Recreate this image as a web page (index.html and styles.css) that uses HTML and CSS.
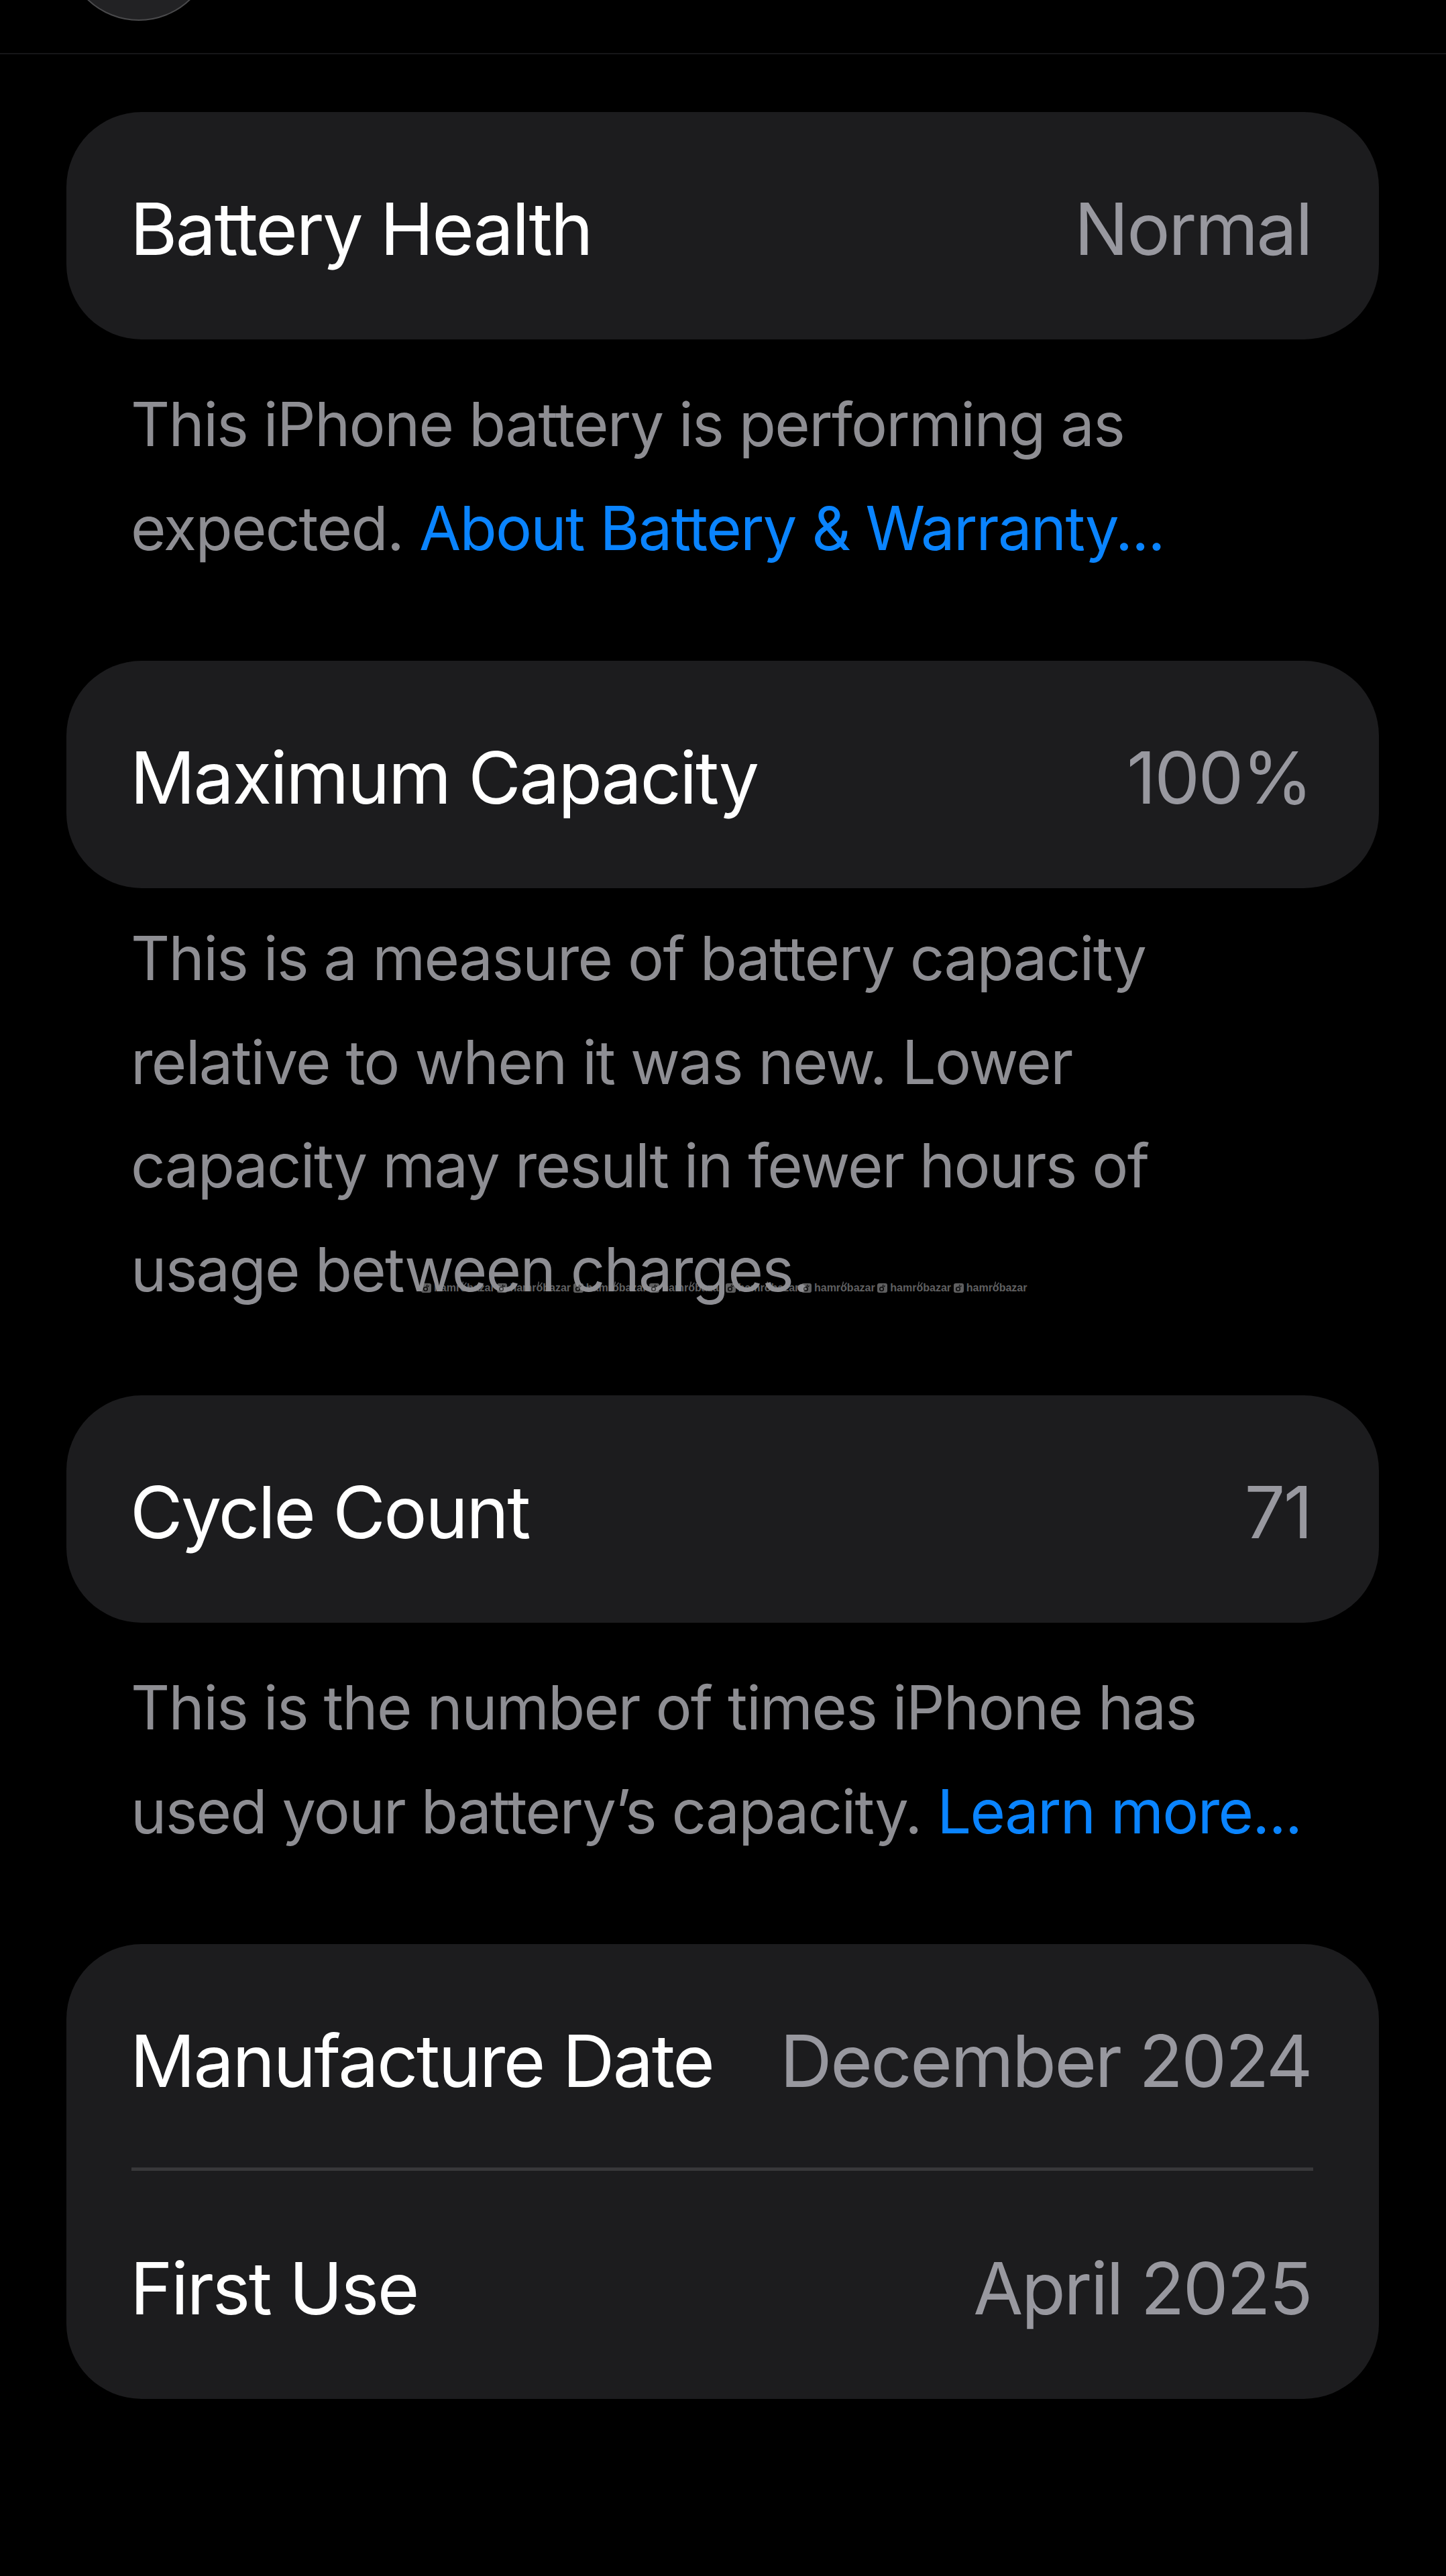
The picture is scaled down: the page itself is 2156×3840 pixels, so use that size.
FILE: index.html
```html
<!DOCTYPE html>
<html lang="en">

<head>
    <meta charset="UTF-8">
    <meta name="viewport" content="width=device-width, initial-scale=1.0">
    <title>Battery Health</title>
    <link rel="stylesheet" href="styles.css">
</head>

<body>

    <svg class="icon-defs" width="0" height="0">
        <symbol id="mark-icon" viewBox="0 0 15 14">
            <rect width="15" height="14" rx="3" fill="#929294" />
            <circle cx="6.5" cy="8.5" r="2.8" fill="none" stroke="#111" stroke-width="1.6" />
            <path d="M8 5 L9 2 M9.5 5.5 L11.5 3.5" stroke="#111" stroke-width="1.2" />
        </symbol>
        <symbol id="mark-leaf" viewBox="0 0 9 8">
            <path d="M1 8 L2.5 1.5 M3.5 8 L7.5 3" stroke="#929294" stroke-width="1.4" fill="none" />
        </symbol>
    </svg>

    <header class="top-bar">
        <div class="back-button"></div>
    </header>

    <main class="content">
        <section class="card">
            <div class="row">
                <span class="label">Battery Health</span>
                <span class="value">Normal</span>
            </div>
        </section>
        <p class="note note-two">This iPhone battery is performing as<br>expected. <a class="link" href="#">About Battery &amp; Warranty...</a></p>

        <section class="card">
            <div class="row">
                <span class="label">Maximum Capacity</span>
                <span class="value">100%</span>
            </div>
        </section>
        <p class="note note-four">This is a measure of battery capacity<br>relative to when it was new. Lower<br>capacity may result in fewer hours of<br>usage between charges.</p>

        <section class="card">
            <div class="row">
                <span class="label">Cycle Count</span>
                <span class="value">71</span>
            </div>
        </section>
        <p class="note note-two">This is the number of times iPhone has<br>used your battery’s capacity. <a class="link" href="#">Learn more...</a></p>

        <section class="card">
            <div class="row">
                <span class="label">Manufacture Date</span>
                <span class="value">December 2024</span>
            </div>
            <div class="divider"></div>
            <div class="row">
                <span class="label">First Use</span>
                <span class="value">April 2025</span>
            </div>
        </section>
    </main>

    <div class="watermark">
        <span class="mark"><svg class="mark-icon"><use href="#mark-icon" /></svg><span class="mark-text">hamrobazar<svg class="mark-leaf"><use href="#mark-leaf" /></svg></span></span>
        <span class="mark"><svg class="mark-icon"><use href="#mark-icon" /></svg><span class="mark-text">hamrobazar<svg class="mark-leaf"><use href="#mark-leaf" /></svg></span></span>
        <span class="mark"><svg class="mark-icon"><use href="#mark-icon" /></svg><span class="mark-text">hamrobazar<svg class="mark-leaf"><use href="#mark-leaf" /></svg></span></span>
        <span class="mark"><svg class="mark-icon"><use href="#mark-icon" /></svg><span class="mark-text">hamrobazar<svg class="mark-leaf"><use href="#mark-leaf" /></svg></span></span>
        <span class="mark"><svg class="mark-icon"><use href="#mark-icon" /></svg><span class="mark-text">hamrobazar<svg class="mark-leaf"><use href="#mark-leaf" /></svg></span></span>
        <span class="mark"><svg class="mark-icon"><use href="#mark-icon" /></svg><span class="mark-text">hamrobazar<svg class="mark-leaf"><use href="#mark-leaf" /></svg></span></span>
        <span class="mark"><svg class="mark-icon"><use href="#mark-icon" /></svg><span class="mark-text">hamrobazar<svg class="mark-leaf"><use href="#mark-leaf" /></svg></span></span>
        <span class="mark"><svg class="mark-icon"><use href="#mark-icon" /></svg><span class="mark-text">hamrobazar<svg class="mark-leaf"><use href="#mark-leaf" /></svg></span></span>
    </div>

</body>

</html>
```

FILE: styles.css
```css
html,
body {
    margin: 0;
    padding: 0;
}

body {
    position: relative;
    width: 2156px;
    height: 3840px;
    overflow: hidden;
    background-color: #000;
    font-family: Inter, "Liberation Sans", sans-serif;
    color: #fff;
}

.icon-defs {
    position: absolute;
}

.top-bar {
    position: relative;
    height: 81px;
    border-bottom: 2px solid #161618;
    box-sizing: border-box;
    overflow: hidden;
}

.back-button {
    position: absolute;
    left: 96px;
    top: -191px;
    width: 222px;
    height: 222px;
    border-radius: 50%;
    background-color: #222224;
    border: 2px solid #4a4a4c;
    box-sizing: border-box;
}

.content {
    padding: 86px 100px 0 99px;
}

.card {
    background-color: #1c1c1e;
    border-radius: 112px;
    padding: 0 98px 0 97px;
}

.row {
    display: flex;
    justify-content: space-between;
    align-items: center;
    height: 339px;
    padding-top: 8px;
    box-sizing: border-box;
}

.label,
.value {
    font-size: 107.5px;
    letter-spacing: -2.5px;
    white-space: nowrap;
}

.label {
    margin-left: -2px;
}

.value {
    margin-right: 3px;
    color: #98989f;
}

.divider {
    height: 5px;
    margin: -6px 0 1px;
    background-color: #38383a;
}

.note {
    margin: 0;
    padding: 0 98px 0 96px;
    font-size: 90.2px;
    line-height: 154.5px;
    letter-spacing: -1.7px;
    color: #8e8e93;
    white-space: nowrap;
}

.note-two {
    padding-top: 50px;
    padding-bottom: 120px;
}

.note-four {
    padding-top: 28px;
    padding-bottom: 110px;
}

.link {
    color: #0a84ff;
    text-decoration: none;
}

.watermark {
    position: absolute;
    left: 628px;
    top: 1913px;
    display: flex;
    color: #929294;
    opacity: 0.65;
    font-family: "Liberation Sans", sans-serif;
    font-size: 16px;
    font-weight: 700;
    line-height: 14px;
}

.mark {
    display: flex;
    align-items: center;
    gap: 4px;
    width: 113.4px;
    flex-shrink: 0;
    white-space: nowrap;
}

.mark-icon {
    display: block;
    width: 15px;
    height: 14px;
    flex-shrink: 0;
}

.mark-text {
    position: relative;
}

.mark-leaf {
    position: absolute;
    left: 41px;
    top: -4px;
    width: 9px;
    height: 8px;
}
```
